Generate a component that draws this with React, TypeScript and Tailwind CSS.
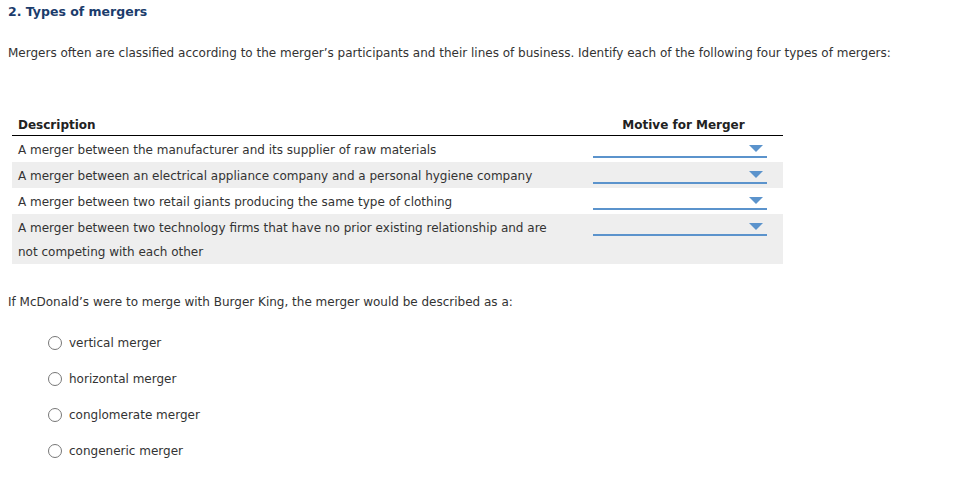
export default function App() {
  const rows = [
    "A merger between the manufacturer and its supplier of raw materials",
    "A merger between an electrical appliance company and a personal hygiene company",
    "A merger between two retail giants producing the same type of clothing",
    "A merger between two technology firms that have no prior existing relationship and are not competing with each other",
  ];
  const options = ["vertical merger", "horizontal merger", "conglomerate merger", "congeneric merger"];

  return (
    <div className="min-h-[477px] bg-white text-[12px] text-[#333] [font-family:'DejaVu_Sans',Verdana,sans-serif]">
      <div className="px-2 pt-[4px]">
        <h2 className="text-[12.5px] font-bold leading-[16px] text-[#1b3c6c]">2. Types of mergers</h2>
        <p className="mt-[25px] leading-[16px]">
          Mergers often are classified according to the merger’s participants and their lines of business. Identify each of the following four types of mergers:
        </p>

        <table className="ml-[4px] mt-[56px] w-[771px] border-collapse">
          <thead>
            <tr className="border-b border-black">
              <th className="px-[6px] pb-[2px] text-left font-bold leading-[16px] text-[#222]">Description</th>
              <th className="w-[199px] pb-[2px] text-center font-bold leading-[16px] text-[#222]">Motive for Merger</th>
            </tr>
          </thead>
          <tbody>
            {rows.map((r, i) => (
              <tr key={i} className={i % 2 === 1 ? "bg-[#eeeeee]" : "bg-white"}>
                <td className="px-[6px] pt-[2px] align-top leading-[24px] text-[#333]">
                  <div className={i === 3 ? "w-[545px]" : ""}>{r}</div>
                </td>
                <td className="align-top">
                  <div className="relative ml-[9px] mr-[16px] mt-[10px] h-[12px] border-b-2 border-[#5b93cc]">
                    <svg className="absolute right-[4px] top-[-1px]" width="14" height="7" viewBox="0 0 14 7">
                      <path d="M0 0 H14 L7 7 Z" fill="#5b93cc" />
                    </svg>
                  </div>
                </td>
              </tr>
            ))}
          </tbody>
        </table>

        <p className="mt-[30px] leading-[16px]">
          If McDonald’s were to merge with Burger King, the merger would be described as a:
        </p>

        <div className="ml-[40px] mt-[25px] flex flex-col gap-[20px]">
          {options.map((o) => (
            <label key={o} className="flex h-[16px] items-center gap-[7px]">
              <span className="h-[14px] w-[14px] rounded-full border border-[#777] bg-white" />
              <span className="leading-[16px] text-[#333]">{o}</span>
            </label>
          ))}
        </div>
      </div>
    </div>
  );
}
